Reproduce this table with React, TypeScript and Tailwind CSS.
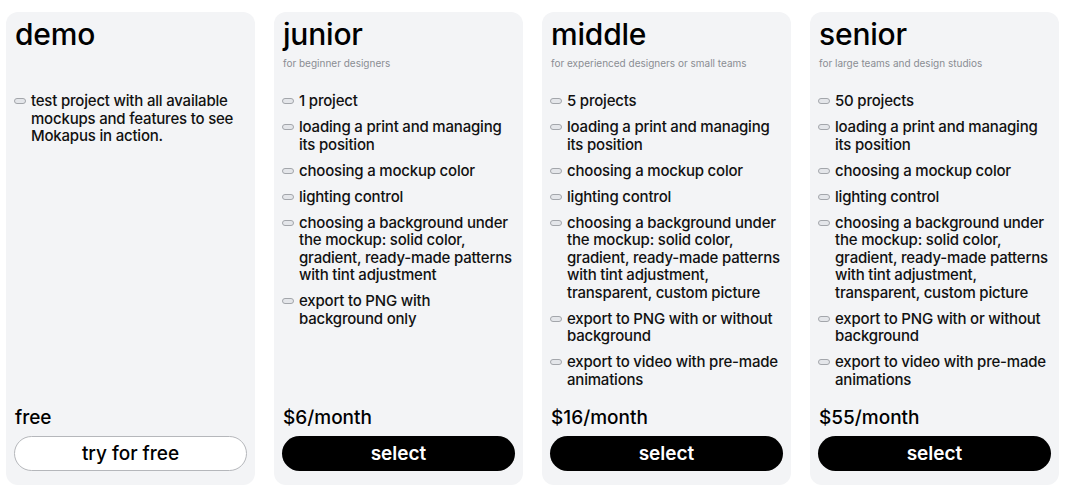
import React from "react";

type Plan = {
  name: string;
  subtitle: string;
  features: string[];
  price: string;
  cta: string;
  primary: boolean;
};

const common = [
  "loading a print and managing its position",
  "choosing a mockup color",
  "lighting control",
];

const plans: Plan[] = [
  {
    name: "demo",
    subtitle: "",
    features: ["test project with all available mockups and features to see Mokapus in action."],
    price: "free",
    cta: "try for free",
    primary: false,
  },
  {
    name: "junior",
    subtitle: "for beginner designers",
    features: [
      "1 project",
      ...common,
      "choosing a background under the mockup: solid color, gradient, ready-made patterns with tint adjustment",
      "export to PNG with background only",
    ],
    price: "$6/month",
    cta: "select",
    primary: true,
  },
  {
    name: "middle",
    subtitle: "for experienced designers or small teams",
    features: [
      "5 projects",
      ...common,
      "choosing a background under the mockup: solid color, gradient, ready-made patterns with tint adjustment, transparent, custom picture",
      "export to PNG with or without background",
      "export to video with pre-made animations",
    ],
    price: "$16/month",
    cta: "select",
    primary: true,
  },
  {
    name: "senior",
    subtitle: "for large teams and design studios",
    features: [
      "50 projects",
      ...common,
      "choosing a background under the mockup: solid color, gradient, ready-made patterns with tint adjustment, transparent, custom picture",
      "export to PNG with or without background",
      "export to video with pre-made animations",
    ],
    price: "$55/month",
    cta: "select",
    primary: true,
  },
];

function PlanCard({ plan }: { plan: Plan }) {
  return (
    <div className="flex w-[249px] shrink-0 flex-col rounded-[12px] bg-[#f3f4f6] px-[8px] pb-[14px] pt-0">
      <h2 className="pl-[1px] text-[30px] font-medium leading-[44px] tracking-[-0.2px] text-black">{plan.name}</h2>
      <p className="h-[14px] pl-[1px] text-[10px] leading-[14px] text-[#8a8d93]">{plan.subtitle}</p>
      <ul className="mt-[22px] flex flex-col gap-[8.5px]">
        {plan.features.map((f) => (
          <li key={f} className="flex items-start gap-[5px] text-[15px] font-medium leading-[17.5px] tracking-[-0.2px] text-[#111]">
            <span className="mt-[6px] h-[6px] w-[12px] shrink-0 rounded-full border border-[#a3a6ab] bg-[#e4e6ea]" />
            <span>{f}</span>
          </li>
        ))}
      </ul>
      <div className="mt-auto">
        <p className="pl-[1px] text-[19px] font-medium leading-[24px] text-black">{plan.price}</p>
        <button
          className={
            plan.primary
              ? "mt-[6px] h-[35px] w-full rounded-full bg-black pt-[1px] text-[19px] font-semibold text-white"
              : "mt-[6px] h-[35px] w-full rounded-full border border-[#b5b7bb] bg-white pt-[1px] text-[19px] font-medium text-black"
          }
        >
          {plan.cta}
        </button>
      </div>
    </div>
  );
}

export default function App() {
  return (
    <main
      className="flex h-[492px] w-[1070px] gap-[19px] bg-white pb-[7px] pl-[6px] pr-[11px] pt-[12px]"
      style={{ fontFamily: "Inter, 'Liberation Sans', sans-serif" }}
    >
      {plans.map((p) => (
        <PlanCard key={p.name} plan={p} />
      ))}
    </main>
  );
}
